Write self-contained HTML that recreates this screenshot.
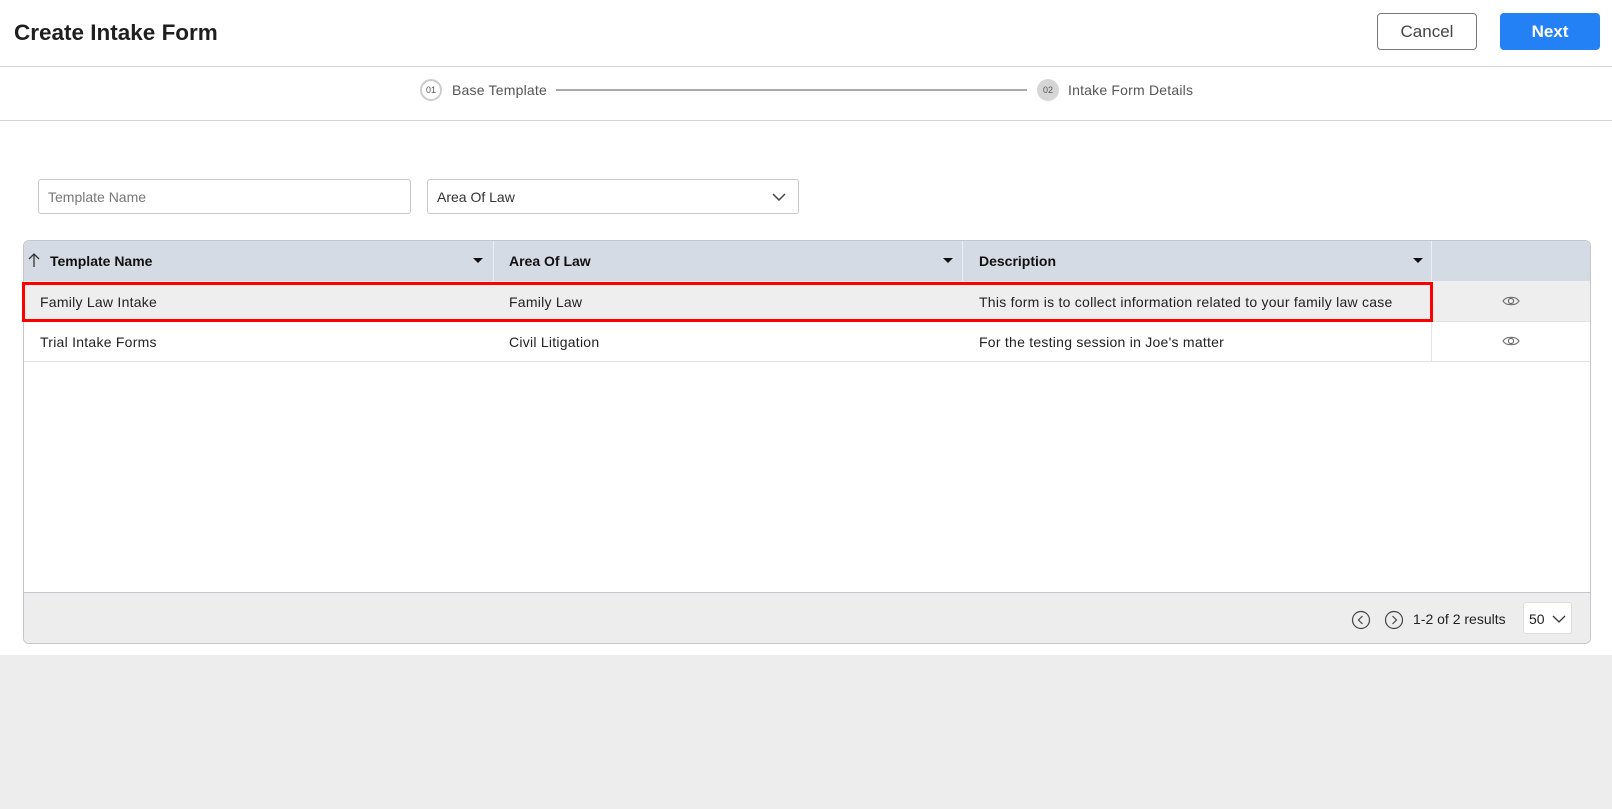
<!DOCTYPE html>
<html><head><meta charset="utf-8"><style>
*{box-sizing:border-box;margin:0;padding:0}
body{width:1612px;height:809px;background:#ededed;font-family:"Liberation Sans",sans-serif;color:#222;position:relative;overflow:hidden}
.top{position:absolute;left:0;top:0;width:1612px;height:655px;background:#fff}
.abs{position:absolute}
h1{position:absolute;left:14px;top:20px;font-size:22.5px;font-weight:bold;color:#1f1f1f}
.btn{position:absolute;top:13px;height:37px;width:100px;border-radius:4px;font-size:17px;display:flex;align-items:center;justify-content:center}
.hl{position:absolute;left:0;width:1612px;height:1px;background:#d4d4d4}
.circ{position:absolute;width:22px;height:22px;border-radius:50%;font-size:9px;display:flex;align-items:center;justify-content:center;color:#555}
.step{position:absolute;font-size:14px;color:#555;top:82px;letter-spacing:0.2px}
.inp{position:absolute;top:179px;height:35px;border:1px solid #c8c8c8;border-radius:3px;font-size:14px;padding:9px 9px;color:#777}
.tbl{position:absolute;left:23px;top:240px;width:1568px;height:404px;border:1px solid #c3c6cc;border-radius:6px;overflow:hidden;background:#fff}
.th{position:absolute;top:0;height:40px;background:#d5dbe4;width:100%}
.cell{position:absolute;font-size:14px;letter-spacing:0.25px}
.hd{font-weight:bold;top:12px;color:#111;letter-spacing:0}
.tri{position:absolute;top:17px;width:0;height:0;border-left:5px solid transparent;border-right:5px solid transparent;border-top:5px solid #111}
.vl{position:absolute;width:1px;background:#e2e4e8}
</style></head><body>
<div class="top"></div>
<h1>Create Intake Form</h1>
<div class="btn" style="left:1377px;border:1px solid #777;color:#444;background:#fff">Cancel</div>
<div class="btn" style="left:1500px;background:#2481f5;color:#fff;font-weight:bold">Next</div>
<div class="hl" style="top:66px"></div>
<div class="circ" style="left:420px;top:79px;border:2px solid #ccc;background:#fff">01</div>
<div class="step" style="left:452px">Base Template</div>
<div class="abs" style="left:556px;top:89px;width:471px;height:2px;background:#aaa"></div>
<div class="circ" style="left:1037px;top:79px;background:#d6d6d6">02</div>
<div class="step" style="left:1068px">Intake Form Details</div>
<div class="hl" style="top:120px"></div>
<div class="inp" style="left:38px;width:373px">Template Name</div>
<div class="inp" style="left:427px;width:372px;color:#333">Area Of Law
<svg class="abs" style="right:12px;top:13px" width="14" height="8" viewBox="0 0 14 8"><path d="M1 1l6 6 6-6" fill="none" stroke="#444" stroke-width="1.5"/></svg></div>
<div class="tbl">
<div class="th"></div>
<svg class="abs" style="left:4px;top:12px" width="12" height="14" viewBox="0 0 12 14"><path d="M6 14V1M1 6l5-5 5 5" fill="none" stroke="#333" stroke-width="1.3"/></svg>
<div class="cell hd" style="left:26px">Template Name</div><div class="tri" style="left:449px"></div>
<div class="vl" style="left:469px;top:0;height:40px;background:#eef0f3"></div>
<div class="cell hd" style="left:485px">Area Of Law</div><div class="tri" style="left:919px"></div>
<div class="vl" style="left:938px;top:0;height:40px;background:#eef0f3"></div>
<div class="cell hd" style="left:955px">Description</div><div class="tri" style="left:1389px"></div>
<div class="vl" style="left:1407px;top:0;height:40px;background:#eef0f3"></div>
<div class="abs" style="left:0;top:40px;width:100%;height:41px;background:#eeeeee;border-bottom:1px solid #e2e2e2"></div>
<div class="abs" style="left:0;top:81px;width:100%;height:40px;border-bottom:1px solid #e2e2e2"></div>
<div class="vl" style="left:1407px;top:81px;height:40px"></div>
<div class="cell" style="left:16px;top:53px">Family Law Intake</div>
<div class="cell" style="left:485px;top:53px">Family Law</div>
<div class="cell" style="left:955px;top:53px">This form is to collect information related to your family law case</div>
<div class="cell" style="left:16px;top:93px">Trial Intake Forms</div>
<div class="cell" style="left:485px;top:93px">Civil Litigation</div>
<div class="cell" style="left:955px;top:93px">For the testing session in Joe's matter</div>
<svg class="abs" style="left:1478px;top:54px" width="18" height="12" viewBox="0 0 18 12"><path d="M1 6C4 1 14 1 17 6C14 11 4 11 1 6Z" fill="none" stroke="#666" stroke-width="1.1"/><circle cx="9" cy="6" r="2.6" fill="none" stroke="#666" stroke-width="1.1"/></svg>
<svg class="abs" style="left:1478px;top:94px" width="18" height="12" viewBox="0 0 18 12"><path d="M1 6C4 1 14 1 17 6C14 11 4 11 1 6Z" fill="none" stroke="#666" stroke-width="1.1"/><circle cx="9" cy="6" r="2.6" fill="none" stroke="#666" stroke-width="1.1"/></svg>
<div class="abs" style="left:0;top:351px;width:100%;height:53px;background:#ededed;border-top:1px solid #c3c6cc"></div>
<svg class="abs" style="left:1327px;top:369px" width="20" height="20" viewBox="0 0 20 20"><circle cx="10" cy="10" r="8.5" fill="none" stroke="#444" stroke-width="1.2"/><path d="M11.5 6l-4 4 4 4" fill="none" stroke="#444" stroke-width="1.2"/></svg>
<svg class="abs" style="left:1360px;top:369px" width="20" height="20" viewBox="0 0 20 20"><circle cx="10" cy="10" r="8.5" fill="none" stroke="#444" stroke-width="1.2"/><path d="M8.5 6l4 4-4 4" fill="none" stroke="#444" stroke-width="1.2"/></svg>
<div class="cell" style="left:1389px;top:370px;color:#222;letter-spacing:0">1-2 of 2 results</div>
<div class="abs" style="left:1499px;top:361px;width:49px;height:32px;background:#fff;border:1px solid #ddd;border-radius:3px;font-size:14px;padding:8px 5px">50
<svg class="abs" style="left:28px;top:12px" width="14" height="8" viewBox="0 0 14 8"><path d="M1 1l6 6 6-6" fill="none" stroke="#333" stroke-width="1.3"/></svg></div>
</div>
<div class="abs" style="left:22px;top:282px;width:1411px;height:40px;border:3px solid #f00"></div>
</body></html>
